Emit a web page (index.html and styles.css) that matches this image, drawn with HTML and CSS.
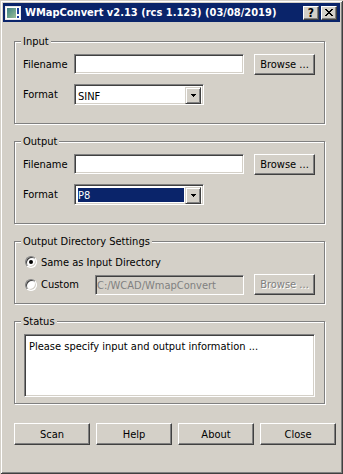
FILE: index.html
```html
<!DOCTYPE html>
<html>
<head>
<meta charset="utf-8">
<link rel="stylesheet" href="styles.css">
</head>
<body>
<div class="window">
  <div class="titlebar">
    <svg class="appicon" width="16" height="14" viewBox="0 0 16 14" shape-rendering="crispEdges">
      <defs>
        <linearGradient id="ig" x1="0" y1="0" x2="1" y2="1">
          <stop offset="0" stop-color="#3d7f86"/>
          <stop offset="0.5" stop-color="#6aa08a"/>
          <stop offset="1" stop-color="#9cbf9a"/>
        </linearGradient>
      </defs>
      <rect x="0" y="0" width="16" height="14" fill="#e8e8e8"/>
      <rect x="1" y="1" width="14" height="12" fill="#fff"/>
      <rect x="2" y="2" width="9" height="10" fill="url(#ig)"/>
      <rect x="12" y="2" width="2" height="6" fill="#1b3f9a"/>
      <rect x="12" y="10" width="2" height="2" fill="#1b3f9a"/>
    </svg>
    <span class="title">WMapConvert v2.13 (rcs 1.123) (03/08/2019)</span>
    <div class="capbtns">
      <span class="capbtn help">?</span>
      <span class="capbtn">
        <svg width="8" height="7" viewBox="0 0 8 7" shape-rendering="crispEdges">
          <path d="M0 0h2v1h1v1h2v-1h1v-1h2v1h-1v1h-1v1h-1v1h1v1h1v1h1v1h-2v-1h-1v-1h-2v1h-1v1h-2v-1h1v-1h1v-1h1v-1h-1v-1h-1v-1h-1z" fill="#000"/>
        </svg>
      </span>
    </div>
  </div>

  <div class="content">
    <fieldset class="group">
      <legend>Input</legend>
      <div class="gbody">
        <div class="row top">
          <span class="lbl">Filename</span>
          <div class="edit"></div>
          <button class="btn browse">Browse ...</button>
        </div>
        <div class="row">
          <span class="lbl">Format</span>
          <div class="combo">
            <span class="combo-val">SINF</span>
            <span class="combo-btn"><svg width="5" height="3" viewBox="0 0 5 3" shape-rendering="crispEdges"><path d="M0 0h5v1h-1v1h-1v1h-1v-1h-1v-1h-1z" fill="#000"/></svg></span>
          </div>
        </div>
      </div>
    </fieldset>

    <fieldset class="group">
      <legend>Output</legend>
      <div class="gbody">
        <div class="row top">
          <span class="lbl">Filename</span>
          <div class="edit"></div>
          <button class="btn browse">Browse ...</button>
        </div>
        <div class="row">
          <span class="lbl">Format</span>
          <div class="combo">
            <span class="combo-val selected">P8</span>
            <span class="combo-btn"><svg width="5" height="3" viewBox="0 0 5 3" shape-rendering="crispEdges"><path d="M0 0h5v1h-1v1h-1v1h-1v-1h-1v-1h-1z" fill="#000"/></svg></span>
          </div>
        </div>
      </div>
    </fieldset>

    <fieldset class="group">
      <legend>Output Directory Settings</legend>
      <div class="gbody dir">
        <div class="row radio-row">
          <span class="radio on"></span>
          <span class="rlabel">Same as Input Directory</span>
        </div>
        <div class="row">
          <span class="radio"></span>
          <span class="rlabel custom">Custom</span>
          <div class="edit disabled">C:/WCAD/WmapConvert</div>
          <button class="btn browse disabled">Browse ...</button>
        </div>
      </div>
    </fieldset>

    <fieldset class="group">
      <legend>Status</legend>
      <div class="gbody status">
        <div class="statusbox">Please specify input and output information ...</div>
      </div>
    </fieldset>

    <div class="buttons">
      <button class="btn action">Scan</button>
      <button class="btn action">Help</button>
      <button class="btn action">About</button>
      <button class="btn action">Close</button>
    </div>
  </div>
</div>
</body>
</html>
```

FILE: styles.css
```css
* {
  box-sizing: border-box;
}

html,
body {
  margin: 0;
  padding: 0;
}

body {
  background: #d4d0c8;
  font-family: "DejaVu Sans Condensed", "DejaVu Sans", sans-serif;
  font-stretch: condensed;
  font-size: 11px;
  line-height: 13px;
  color: #000;
}

.window {
  width: 343px;
  height: 474px;
  padding: 3px;
  background: #d4d0c8;
  box-shadow: inset 1px 1px 0 #d4d0c8, inset -1px -1px 0 #404040,
    inset 2px 2px 0 #fff, inset -2px -2px 0 #808080;
  display: flex;
  flex-direction: column;
}

.titlebar {
  height: 19px;
  background: #0a246a;
  display: flex;
  align-items: center;
  padding: 0 3px 0 2px;
}

.appicon {
  flex: none;
  display: block;
}

.title {
  flex: 1;
  margin-left: 4px;
  color: #fff;
  font-weight: bold;
  white-space: nowrap;
}

.capbtns {
  display: flex;
  gap: 2px;
}

.capbtn {
  width: 16px;
  height: 14px;
  background: #d4d0c8;
  border: 1px solid;
  border-color: #fff #404040 #404040 #fff;
  box-shadow: inset -1px -1px 0 #808080;
  display: flex;
  align-items: center;
  justify-content: center;
}

.capbtn.help {
  font-weight: bold;
  font-size: 12px;
  line-height: 12px;
  font-family: "DejaVu Sans", sans-serif;
}

.content {
  padding: 13px 0 0 11px;
  display: flex;
  flex-direction: column;
  gap: 11px;
}

.group {
  width: 311px;
  margin: 0;
  padding: 0;
  min-width: 0;
  border: 1px solid #808080;
  box-shadow: 1px 1px 0 #fff, inset 1px 1px 0 #fff;
}

.group legend {
  margin-left: 6px;
  padding: 0 2px;
  background: #d4d0c8;
  line-height: 13px;
}

.gbody {
  padding: 6px 9px 18px 8px;
  display: flex;
  flex-direction: column;
  gap: 9px;
}

.row {
  display: flex;
  align-items: center;
  height: 21px;
}

.row.top {
  align-items: flex-start;
}

.row.top .lbl {
  align-self: center;
}

.lbl {
  width: 51px;
  flex: none;
}

.edit {
  width: 170px;
  height: 20px;
  background: #fff;
  border: 1px solid;
  border-color: #808080 #fff #fff #808080;
  box-shadow: inset 1px 1px 0 #404040, inset -1px -1px 0 #d4d0c8;
  padding: 3px 2px;
  white-space: nowrap;
  overflow: hidden;
}

.edit.disabled {
  width: 149px;
  background: #d4d0c8;
  color: #808080;
  padding: 3px 1px;
}

.btn {
  font: inherit;
  color: #000;
  background: #d4d0c8;
  border: 1px solid;
  border-color: #fff #404040 #404040 #fff;
  box-shadow: inset -1px -1px 0 #808080;
  padding: 0;
  margin: 0;
  height: 21px;
  display: flex;
  align-items: center;
  justify-content: center;
}

.btn.browse {
  width: 61px;
  margin-left: 10px;
}

.btn.disabled {
  color: #808080;
  text-shadow: 1px 1px 0 #fff;
}

.combo {
  width: 130px;
  height: 21px;
  background: #fff;
  border: 1px solid;
  border-color: #808080 #fff #fff #808080;
  box-shadow: inset 1px 1px 0 #404040, inset -1px -1px 0 #d4d0c8;
  padding: 2px;
  display: flex;
}

.combo-val {
  flex: 1;
  padding: 2px 1px 0 1px;
  margin: 1px 0 0 0;
}

.combo-val.selected {
  margin: 1px 1px 0 1px;
  padding: 1px 0 0 0;
  background: #0a246a;
  color: #fff;
}

.combo-btn {
  width: 16px;
  height: 17px;
  flex: none;
  background: #d4d0c8;
  border: 1px solid;
  border-color: #d4d0c8 #404040 #404040 #d4d0c8;
  box-shadow: inset 1px 1px 0 #fff, inset -1px -1px 0 #808080;
  display: flex;
  align-items: center;
  justify-content: center;
}

.combo-btn svg {
  display: block;
}

.gbody.dir {
  padding: 7px 9px 8px 10px;
  gap: 5px;
}

.row.radio-row {
  height: 14px;
}

.radio {
  flex: none;
  width: 12px;
  height: 12px;
  border-radius: 50%;
  border: 1px solid;
  border-color: #808080 #fff #fff #808080;
  box-shadow: inset 1px 1px 0 #404040, inset -1px -1px 0 #d4d0c8;
  background: #fff;
  display: flex;
  align-items: center;
  justify-content: center;
}

.radio.on::after {
  content: "";
  width: 4px;
  height: 4px;
  border-radius: 50%;
  background: #000;
}

.rlabel {
  margin-left: 4px;
  white-space: nowrap;
}

.rlabel.custom {
  width: 54px;
  flex: none;
}

.gbody.status {
  padding: 6px 9px 6px 9px;
}

.statusbox {
  height: 63px;
  background: #fff;
  border: 1px solid;
  border-color: #808080 #fff #fff #808080;
  box-shadow: inset 1px 1px 0 #404040, inset -1px -1px 0 #d4d0c8;
  padding: 5px 4px;
}

.buttons {
  margin-top: 8px;
  display: flex;
  gap: 6px;
}

.btn.action {
  width: 76px;
  height: 22px;
}
```
